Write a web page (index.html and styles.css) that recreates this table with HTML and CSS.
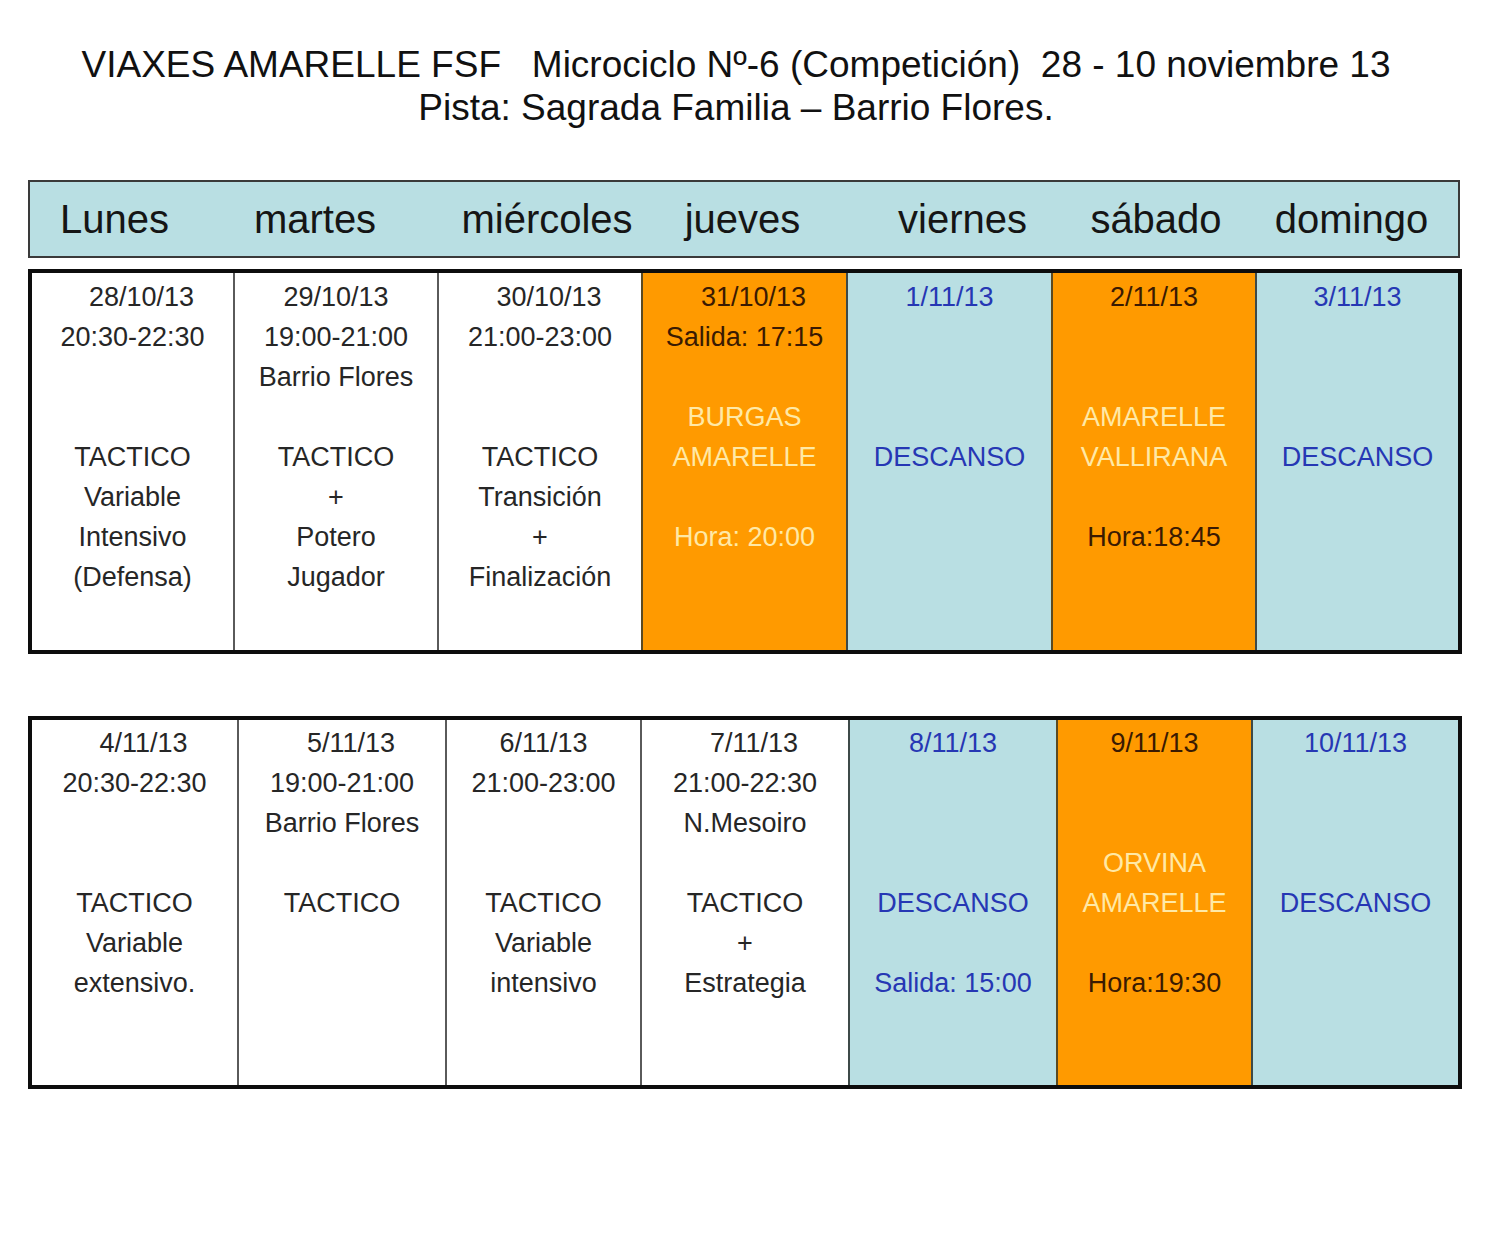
FILE: index.html
```html
<!DOCTYPE html>
<html lang="es">
<head>
<meta charset="utf-8">
<title>Microciclo Nº-6</title>
<link rel="stylesheet" href="styles.css">
</head>
<body>
<div class="page">
  <header class="title">
    <div class="t1">VIAXES AMARELLE FSF   Microciclo Nº-6 (Competición)  28 - 10 noviembre 13</div>
    <div class="t2">Pista: Sagrada Familia – Barrio Flores.</div>
  </header>

  <div class="days">
    <span class="day n1">Lunes</span>
    <span class="day n2">martes</span>
    <span class="day n3">miércoles</span>
    <span class="day n4">jueves</span>
    <span class="day n5">viernes</span>
    <span class="day n6">sábado</span>
    <span class="day n7">domingo</span>
  </div>

  <div class="week w1">
    <div class="cell white">
      <div class="ln sh">28/10/13</div>
      <div class="ln">20:30-22:30</div>
      <div class="ln"></div>
      <div class="ln"></div>
      <div class="ln">TACTICO</div>
      <div class="ln">Variable</div>
      <div class="ln">Intensivo</div>
      <div class="ln">(Defensa)</div>
    </div>
    <div class="cell white">
      <div class="ln">29/10/13</div>
      <div class="ln">19:00-21:00</div>
      <div class="ln">Barrio Flores</div>
      <div class="ln"></div>
      <div class="ln">TACTICO</div>
      <div class="ln">+</div>
      <div class="ln">Potero</div>
      <div class="ln">Jugador</div>
    </div>
    <div class="cell white">
      <div class="ln sh">30/10/13</div>
      <div class="ln">21:00-23:00</div>
      <div class="ln"></div>
      <div class="ln"></div>
      <div class="ln">TACTICO</div>
      <div class="ln">Transición</div>
      <div class="ln">+</div>
      <div class="ln">Finalización</div>
    </div>
    <div class="cell orange">
      <div class="ln sh dark">31/10/13</div>
      <div class="ln dark">Salida: 17:15</div>
      <div class="ln"></div>
      <div class="ln light">BURGAS</div>
      <div class="ln light">AMARELLE</div>
      <div class="ln"></div>
      <div class="ln light">Hora: 20:00</div>
    </div>
    <div class="cell blue">
      <div class="ln">1/11/13</div>
      <div class="ln"></div>
      <div class="ln"></div>
      <div class="ln"></div>
      <div class="ln">DESCANSO</div>
    </div>
    <div class="cell orange">
      <div class="ln dark">2/11/13</div>
      <div class="ln"></div>
      <div class="ln"></div>
      <div class="ln light">AMARELLE</div>
      <div class="ln light">VALLIRANA</div>
      <div class="ln"></div>
      <div class="ln dark">Hora:18:45</div>
    </div>
    <div class="cell blue">
      <div class="ln">3/11/13</div>
      <div class="ln"></div>
      <div class="ln"></div>
      <div class="ln"></div>
      <div class="ln">DESCANSO</div>
    </div>
  </div>

  <div class="week w2">
    <div class="cell white">
      <div class="ln sh">4/11/13</div>
      <div class="ln">20:30-22:30</div>
      <div class="ln"></div>
      <div class="ln"></div>
      <div class="ln">TACTICO</div>
      <div class="ln">Variable</div>
      <div class="ln">extensivo.</div>
    </div>
    <div class="cell white">
      <div class="ln sh">5/11/13</div>
      <div class="ln">19:00-21:00</div>
      <div class="ln">Barrio Flores</div>
      <div class="ln"></div>
      <div class="ln">TACTICO</div>
    </div>
    <div class="cell white">
      <div class="ln">6/11/13</div>
      <div class="ln">21:00-23:00</div>
      <div class="ln"></div>
      <div class="ln"></div>
      <div class="ln">TACTICO</div>
      <div class="ln">Variable</div>
      <div class="ln">intensivo</div>
    </div>
    <div class="cell white">
      <div class="ln sh">7/11/13</div>
      <div class="ln">21:00-22:30</div>
      <div class="ln">N.Mesoiro</div>
      <div class="ln"></div>
      <div class="ln">TACTICO</div>
      <div class="ln">+</div>
      <div class="ln">Estrategia</div>
    </div>
    <div class="cell blue">
      <div class="ln">8/11/13</div>
      <div class="ln"></div>
      <div class="ln"></div>
      <div class="ln"></div>
      <div class="ln">DESCANSO</div>
      <div class="ln"></div>
      <div class="ln">Salida: 15:00</div>
    </div>
    <div class="cell orange">
      <div class="ln dark">9/11/13</div>
      <div class="ln"></div>
      <div class="ln"></div>
      <div class="ln light">ORVINA</div>
      <div class="ln light">AMARELLE</div>
      <div class="ln"></div>
      <div class="ln dark">Hora:19:30</div>
    </div>
    <div class="cell blue">
      <div class="ln">10/11/13</div>
      <div class="ln"></div>
      <div class="ln"></div>
      <div class="ln"></div>
      <div class="ln">DESCANSO</div>
    </div>
  </div>
</div>
</body>
</html>
```

FILE: styles.css
```css
html, body {
  margin: 0;
  padding: 0;
  background: #ffffff;
}

body {
  font-family: "Liberation Sans", Arial, sans-serif;
  color: #1e1e1e;
}

.page {
  width: 1500px;
  padding: 43px 0 0 28px;
  box-sizing: border-box;
}

.title {
  width: 1416px;
  text-align: center;
  font-size: 37px;
  line-height: 43px;
  color: #111;
}

.t1 {
  white-space: pre;
}

.days {
  margin-top: 51px;
  width: 1432px;
  height: 78px;
  box-sizing: border-box;
  border: 2px solid #3a3a3a;
  background: #b9dfe3;
  display: grid;
  grid-template-columns: 201px 204px 204px 205px 205px 204px 205px;
  align-items: center;
  font-size: 40px;
  color: #151515;
}

.day {
  justify-self: center;
  line-height: 48px;
}

.n1 { margin-right: 32px; }
.n2 { margin-right: 36px; }
.n3 { margin-left: 20px; }
.n4 { margin-left: 2px; }
.n5 { margin-left: 32px; }
.n6 { margin-left: 10px; }
.n7 { margin-right: 8px; }

.week {
  width: 1434px;
  box-sizing: border-box;
  border: 4px solid #0d0d0d;
  display: grid;
}

.w1 {
  margin-top: 11px;
  height: 385px;
  grid-template-columns: 201px 204px 204px 205px 205px 204px 203px;
}

.w2 {
  margin-top: 62px;
  height: 373px;
  grid-template-columns: 205px 208px 195px 208px 208px 195px 207px;
}

.cell {
  border-left: 2px solid #5a5a5a;
  text-align: center;
  font-size: 27px;
  padding-top: 4px;
}

.w2 .cell {
  padding-top: 3px;
}

.cell:first-child {
  border-left: 0;
}

.ln {
  height: 40px;
  line-height: 40px;
  white-space: nowrap;
}

.sh {
  padding-left: 18px;
}

.white {
  background: #ffffff;
  color: #262626;
}

.orange {
  background: #ff9a00;
  border-left-color: #5b4a22;
}

.blue {
  background: #b9dfe3;
  color: #2637b4;
  border-left-color: #3e4a48;
}

.dark {
  color: #3a1a02;
}

.light {
  color: #ffe9a6;
}
```
